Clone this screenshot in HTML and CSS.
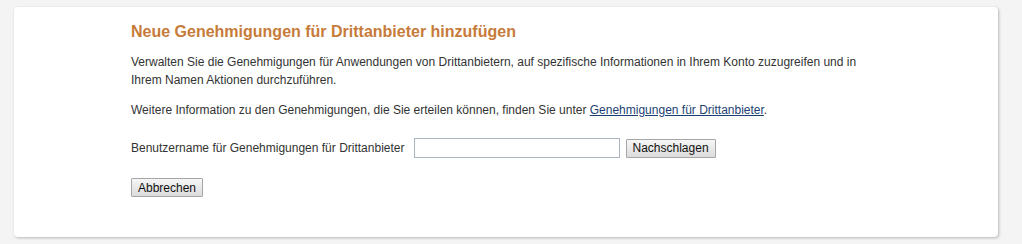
FILE: index.html
```html
<!DOCTYPE html>
<html lang="de">
<head>
    <meta charset="UTF-8">
    <title>Neue Genehmigungen für Drittanbieter hinzufügen</title>
    <link rel="stylesheet" href="styles.css">
</head>
<body>
    <div class="panel">
        <h2 class="panel-title">Neue Genehmigungen für Drittanbieter hinzufügen</h2>
        <p>Verwalten Sie die Genehmigungen für Anwendungen von Drittanbietern, auf spezifische Informationen in Ihrem Konto zuzugreifen und in Ihrem Namen Aktionen durchzuführen.</p>
        <p>Weitere Information zu den Genehmigungen, die Sie erteilen können, finden Sie unter <a href="#">Genehmigungen für Drittanbieter</a>.</p>
        <div class="lookup-row">
            <label for="username">Benutzername für Genehmigungen für Drittanbieter</label>
            <input type="text" id="username">
            <button class="btn">Nachschlagen</button>
        </div>
        <button class="btn">Abbrechen</button>
    </div>
</body>
</html>
```

FILE: styles.css
```css
body {
    margin: 0;
    padding: 7px 24px 7px 14px;
    background-color: #f4f4f4;
    font-family: "Liberation Sans", Arial, sans-serif;
    font-size: 12px;
    color: #333;
}

.panel {
    background-color: #fff;
    border-radius: 4px;
    box-shadow: 1px 1px 3px rgba(0, 0, 0, 0.25);
    padding: 15px 130px 41px 117px;
    height: 174px;
}

.panel-title {
    margin: 0 0 11px 0;
    font-size: 16px;
    line-height: 20px;
    color: #c77b3a;
}

p {
    margin: 0 0 12px 0;
    line-height: 18px;
}

a {
    color: #1c3f73;
}

.lookup-row {
    display: flex;
    align-items: center;
    margin-top: 19px;
    margin-bottom: 20px;
}

.lookup-row label {
    margin-right: 9px;
}

.lookup-row input {
    width: 202px;
    height: 16px;
    padding: 1px;
    border: 1px solid #a9b6c2;
    margin: 0 6px 0 0;
}

.btn {
    font-family: "Liberation Sans", Arial, sans-serif;
    font-size: 12px;
    color: #111;
    height: 19px;
    padding: 0 6px;
    border: 1px solid #a6a6a6;
    border-radius: 1px;
    background: linear-gradient(#f6f6f6, #dcdcdc);
}
```
